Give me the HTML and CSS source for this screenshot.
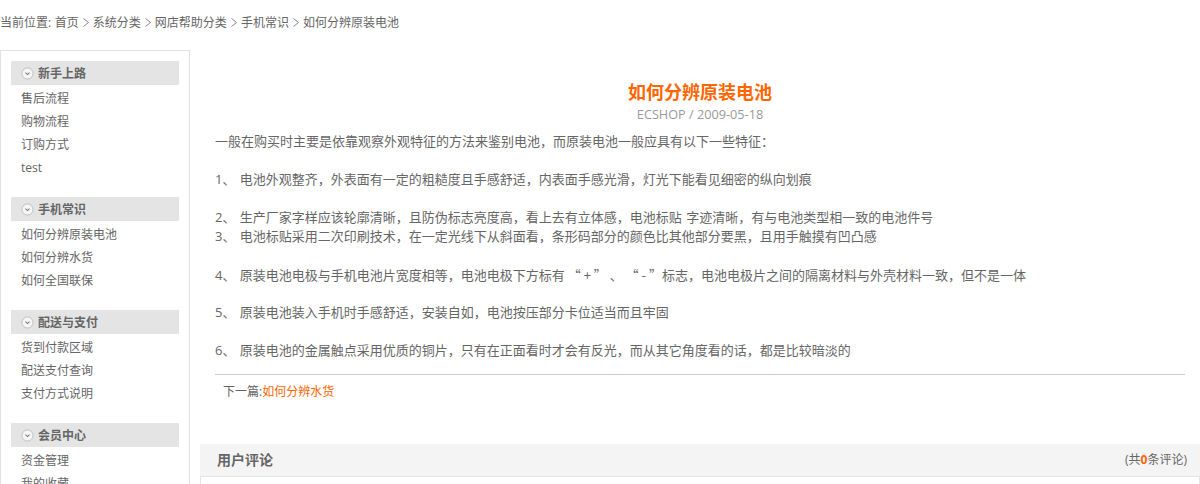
FILE: index.html
```html
<!DOCTYPE html>
<html lang="zh-CN">
    <head>
        <meta charset="UTF-8">
        <title>如何分辨原装电池</title>
        <link rel="stylesheet" href="styles.css">
    </head>
    <body>
        <div class="breadcrumb">当前位置: <a>首页</a> <svg class="sep" viewBox="0 0 6 9"><path d="M.5 .5l5 4-5 4"/></svg> <a>系统分类</a> <svg class="sep" viewBox="0 0 6 9"><path d="M.5 .5l5 4-5 4"/></svg> <a>网店帮助分类</a> <svg class="sep" viewBox="0 0 6 9"><path d="M.5 .5l5 4-5 4"/></svg> <a>手机常识</a> <svg class="sep" viewBox="0 0 6 9"><path d="M.5 .5l5 4-5 4"/></svg> <a>如何分辨原装电池</a></div>

        <div class="page">
            <div class="sidebar">
                <div class="cat">
                    <h3><svg class="arrow" viewBox="0 0 14 14"><circle cx="7" cy="7" r="6" fill="#f6f6f6" stroke="#bbb"/><path d="M4.8 6l2.2 2.2L9.2 6" fill="none" stroke="#777" stroke-width="1.1"/></svg><span>新手上路</span></h3>
                    <a>售后流程</a>
                    <a>购物流程</a>
                    <a>订购方式</a>
                    <a>test</a>
                </div>
                <div class="cat">
                    <h3><svg class="arrow" viewBox="0 0 14 14"><circle cx="7" cy="7" r="6" fill="#f6f6f6" stroke="#bbb"/><path d="M4.8 6l2.2 2.2L9.2 6" fill="none" stroke="#777" stroke-width="1.1"/></svg><span>手机常识</span></h3>
                    <a>如何分辨原装电池</a>
                    <a>如何分辨水货</a>
                    <a>如何全国联保</a>
                </div>
                <div class="cat">
                    <h3><svg class="arrow" viewBox="0 0 14 14"><circle cx="7" cy="7" r="6" fill="#f6f6f6" stroke="#bbb"/><path d="M4.8 6l2.2 2.2L9.2 6" fill="none" stroke="#777" stroke-width="1.1"/></svg><span>配送与支付</span></h3>
                    <a>货到付款区域</a>
                    <a>配送支付查询</a>
                    <a>支付方式说明</a>
                </div>
                <div class="cat">
                    <h3><svg class="arrow" viewBox="0 0 14 14"><circle cx="7" cy="7" r="6" fill="#f6f6f6" stroke="#bbb"/><path d="M4.8 6l2.2 2.2L9.2 6" fill="none" stroke="#777" stroke-width="1.1"/></svg><span>会员中心</span></h3>
                    <a>资金管理</a>
                    <a>我的收藏</a>
                </div>
            </div>

            <div class="main">
                <div class="article">
                    <h1>如何分辨原装电池</h1>
                    <div class="meta">ECSHOP / 2009-05-18</div>
                    <div class="content">
                        <p>一般在购买时主要是依靠观察外观特征的方法来鉴别电池，而原装电池一般应具有以下一些特征：</p>
                        <p>&nbsp;</p>
                        <p>1、 电池外观整齐，外表面有一定的粗糙度且手感舒适，内表面手感光滑，灯光下能看见细密的纵向划痕</p>
                        <p>&nbsp;</p>
                        <p>2、 生产厂家字样应该轮廓清晰，且防伪标志亮度高，看上去有立体感，电池标贴 字迹清晰，有与电池类型相一致的电池件号</p>
                        <p>3、 电池标贴采用二次印刷技术，在一定光线下从斜面看，条形码部分的颜色比其他部分要黑，且用手触摸有凹凸感</p>
                        <p>&nbsp;</p>
                        <p>4、 原装电池电极与手机电池片宽度相等，电池电极下方标有<span class="marks"> “ + ” 、 “ - ”</span>标志，电池电极片之间的隔离材料与外壳材料一致，但不是一体</p>
                        <p>&nbsp;</p>
                        <p>5、 原装电池装入手机时手感舒适，安装自如，电池按压部分卡位适当而且牢固</p>
                        <p>&nbsp;</p>
                        <p>6、 原装电池的金属触点采用优质的铜片，只有在正面看时才会有反光，而从其它角度看的话，都是比较暗淡的</p>
                    </div>
                    <div class="next">下一篇:<a>如何分辨水货</a></div>
                </div>

                <div class="comments">
                    <div class="comments-head">
                        <h4>用户评论</h4>
                        <span>(共<b>0</b>条评论)</span>
                    </div>
                    <div class="comments-body"></div>
                </div>
            </div>
        </div>
    </body>
</html>
```

FILE: styles.css
```css
* {
    margin: 0;
    padding: 0;
    box-sizing: border-box;
}

html, body {
    height: 484px;
    overflow: hidden;
}

body {
    font-family: "Open Sans", "Noto Sans CJK SC", sans-serif;
    font-size: 12px;
    color: #666;
    background: #fff;
}

.breadcrumb {
    height: 50px;
    padding-top: 14px;
    line-height: 18px;
    word-spacing: 0.4px;
}

.sep {
    width: 6px;
    height: 9px;
    margin: 0 0.5px;
    fill: none;
    stroke: #777;
    stroke-width: 0.9;
}

.page {
    display: flex;
    align-items: flex-start;
}

/* left column */
.sidebar {
    width: 190px;
    height: 600px;
    flex: none;
    padding: 10px 10px 0;
    border: 1px solid #e2e2e2;
}

.cat {
    margin-bottom: 18px;
}

.cat h3 {
    display: flex;
    align-items: center;
    height: 24px;
    padding-left: 10px;
    margin-bottom: 2px;
    background: #e4e4e4;
    font-size: 12px;
    font-weight: bold;
    color: #666;
}

.cat h3 span {
    margin-top: -1px;
}

.arrow {
    width: 13px;
    height: 13px;
    margin-right: 4px;
}

.cat a {
    display: block;
    height: 23px;
    line-height: 23px;
    padding-left: 10px;
}

/* article */
.main {
    flex: 1;
    padding-left: 10px;
}

.article {
    height: 394px;
    padding: 30px 15px 0;
}

.article h1 {
    height: 25px;
    line-height: 24px;
    text-align: center;
    font-size: 18px;
    color: #f60;
}

.meta {
    height: 18px;
    line-height: 18px;
    text-align: center;
    font-size: 12.7px;
    color: #999;
}

.content {
    padding-top: 9px;
    padding-bottom: 14px;
    border-bottom: 1px solid #ccc;
    font-size: 13px;
    word-spacing: 1px;
}

.content p {
    height: 19px;
    line-height: 19px;
}

.marks {
    font-family: "Noto Sans CJK SC", sans-serif;
    word-spacing: 0;
}

.next {
    padding: 8px 0 0 8px;
    line-height: 18px;
}

.next a {
    color: #f60;
}

/* comments */
.comments-head {
    display: flex;
    justify-content: space-between;
    align-items: center;
    height: 33px;
    padding: 0 13px 3px 17px;
    background: #f4f4f4;
    border-bottom: 1px solid #e4e4e4;
}

.comments-head h4 {
    font-size: 14px;
    color: #666;
}

.comments-head b {
    color: #f60;
}

.comments-body {
    height: 100px;
    border-left: 1px solid #e4e4e4;
    border-right: 1px solid #e4e4e4;
}
```
